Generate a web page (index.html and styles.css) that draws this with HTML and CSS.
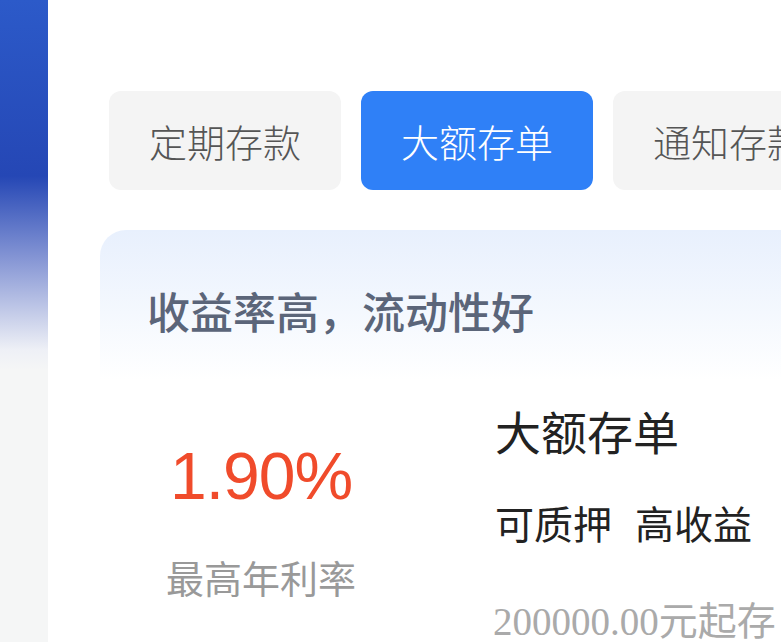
FILE: index.html
```html
<!DOCTYPE html>
<html lang="zh-CN">
<head>
<meta charset="utf-8">
<title>大额存单</title>
<link rel="stylesheet" href="styles.css">
</head>
<body>
<div class="page">
  <aside class="side"></aside>
  <main class="main">
    <nav class="tabs">
      <div class="tab">定期存款</div>
      <div class="tab active">大额存单</div>
      <div class="tab">通知存款</div>
    </nav>
    <section class="banner">
      <p class="banner-text">收益率高，流动性好</p>
    </section>
    <section class="product">
      <div class="rate-col">
        <div class="rate">1.90%</div>
        <div class="rate-label">最高年利率</div>
      </div>
      <div class="info-col">
        <div class="title">大额存单</div>
        <div class="tags"><span>可质押</span><span class="tag2">高收益</span></div>
        <div class="min"><span class="num">200000.00</span>元起存</div>
      </div>
    </section>
  </main>
</div>
</body>
</html>
```
FILE: styles.css
```css
html, body {
  margin: 0;
  padding: 0;
  background: #ffffff;
}
body {
  font-family: "Noto Sans CJK SC", "Noto Sans", sans-serif;
}
.page {
  display: flex;
  width: 781px;
  height: 642px;
  overflow: hidden;
}
.side {
  width: 48px;
  flex-shrink: 0;
  background: linear-gradient(to bottom, #2c5ac9 0px, #2547b5 176px, #8797d5 260px, #eef0f6 350px, #f5f6f6 370px, #f5f6f6 100%);
}
.main {
  flex: 1;
  min-width: 0;
  overflow: hidden;
  padding: 91px 0 0 52px;
}
.tabs {
  display: flex;
  gap: 20px;
  margin-left: 9px;
}
.tab {
  flex-shrink: 0;
  width: 232px;
  height: 99px;
  border-radius: 12px;
  background: #f4f4f4;
  color: #555555;
  font-size: 38px;
  font-weight: 300;
  display: flex;
  align-items: center;
  justify-content: center;
  white-space: nowrap;
}
.tab.active {
  background: #2f80f7;
  color: #ffffff;
}
.banner {
  margin-top: 40px;
  height: 150px;
  border-radius: 26px 0 0 0;
  background: linear-gradient(to bottom, #e8f0fd 0%, #f4f8fe 55%, #ffffff 100%);
  display: flex;
  align-items: center;
  padding-left: 47px;
  width: 1000px;
}
.banner-text {
  margin: 10px 0 0 0;
  font-size: 43px;
  font-weight: 500;
  color: #5b6579;
  white-space: nowrap;
}
.product {
  display: flex;
  padding-top: 20px;
}
.rate-col {
  width: 322px;
  flex-shrink: 0;
  display: flex;
  flex-direction: column;
  align-items: center;
  padding-top: 36px;
}
.rate {
  font-family: "Liberation Sans", "Noto Sans", sans-serif;
  font-size: 66px;
  line-height: 80px;
  color: #f04b2b;
  letter-spacing: -1px;
}
.rate-label {
  margin-top: 36px;
  font-size: 38px;
  line-height: 50px;
  color: #999999;
}
.info-col {
  margin-left: 73px;
  white-space: nowrap;
}
.title {
  font-size: 46px;
  line-height: 60px;
  color: #222222;
}
.tags {
  margin-top: 37px;
  font-size: 39px;
  line-height: 50px;
  color: #222222;
}
.tag2 {
  margin-left: 23px;
}
.min {
  margin-top: 46px;
  margin-left: -2px;
  font-size: 39px;
  line-height: 50px;
  color: #aaaaaa;
}
.min .num {
  font-family: "Liberation Serif", serif;
  font-size: 39px;
}
```
